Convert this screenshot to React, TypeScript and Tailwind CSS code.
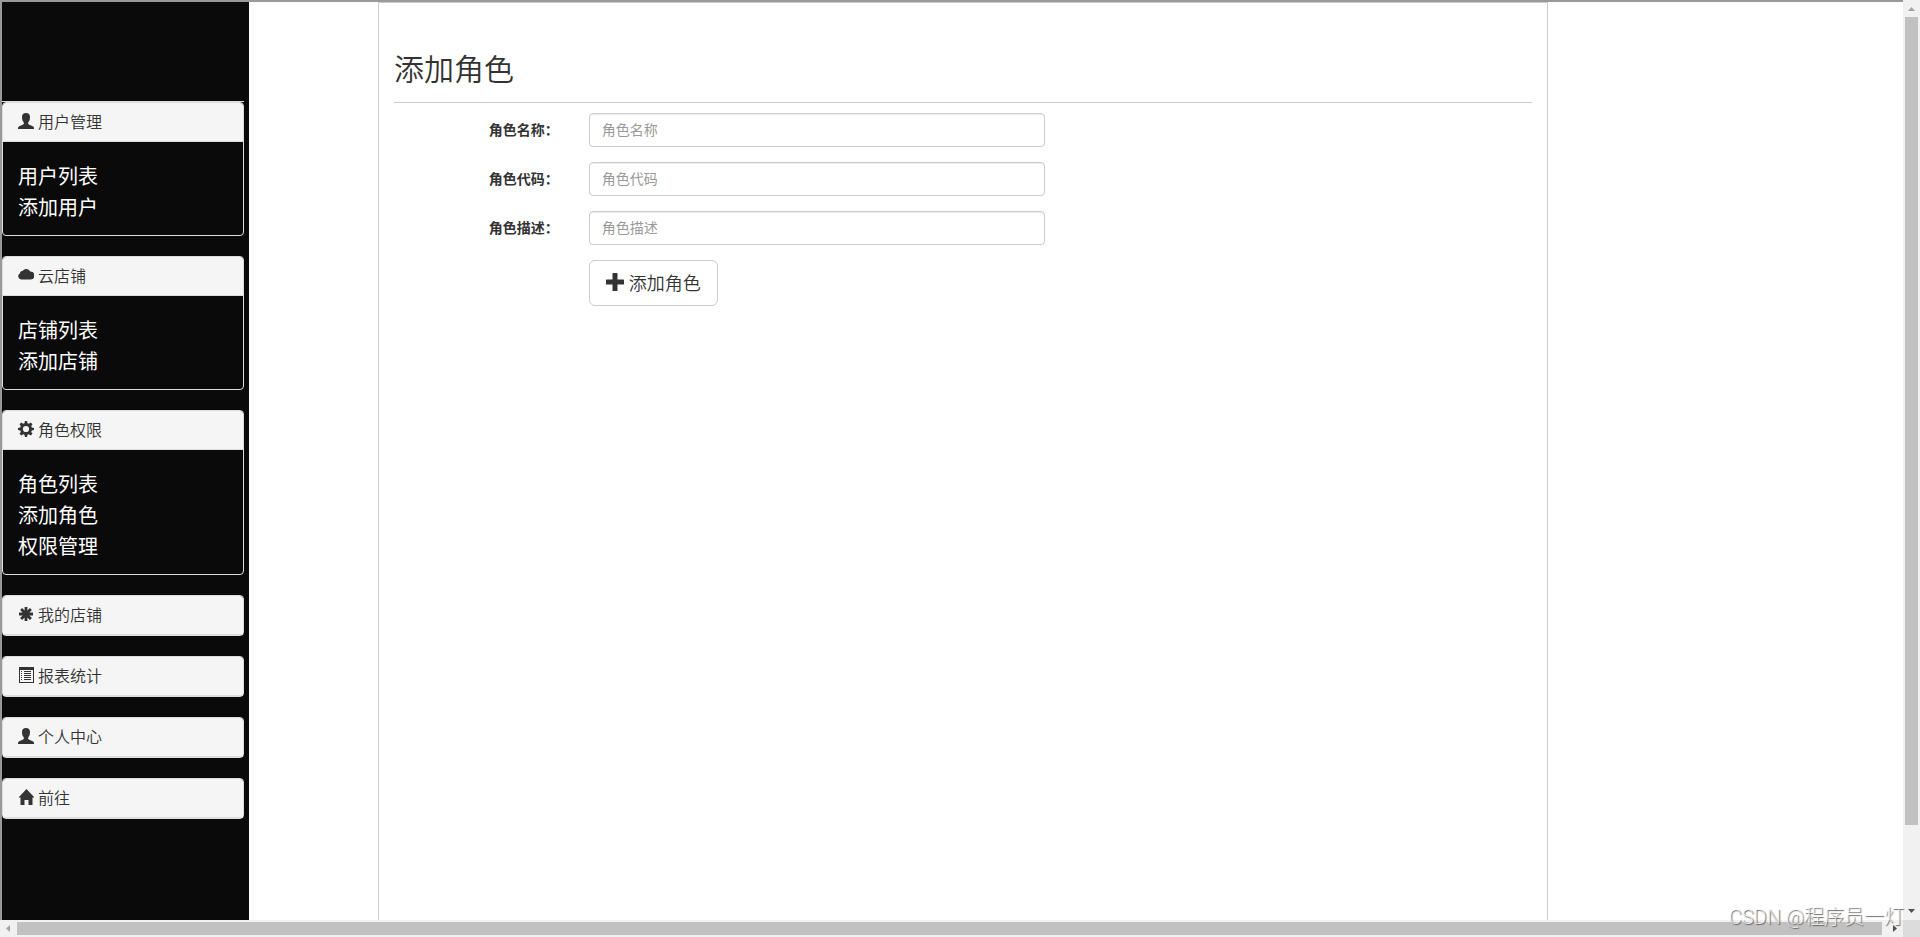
import { useState } from "react";
import type { ReactNode } from "react";

interface MenuGroup {
  title: string;
  icon: ReactNode;
  items?: string[];
}

/* =========================
   ICONS
========================= */
function Icon({ children, className = "size-4" }: { children: ReactNode; className?: string }) {
  return (
    <svg viewBox="0 0 16 16" fill="currentColor" aria-hidden="true" className={`shrink-0 ${className}`}>
      {children}
    </svg>
  );
}

const userIcon = (
  <Icon>
    <path d="M8 0C5.400 0 4 1.600 4 4c0 1.900.3 3.300 1 4.300.5.700.9 1.200.9 1.900 0 .7-.4 1.100-1.300 1.500L1.200 13.300C.4 13.700 0 14.200 0 15v1h16v-1c0-.8-.4-1.300-1.200-1.700l-3.400-1.600c-.9-.4-1.300-.8-1.300-1.500 0-.7.4-1.200.9-1.900.7-1 1-2.400 1-4.300C12 1.600 10.600 0 8 0z" />
  </Icon>
);

const cloudIcon = (
  <Icon>
    <path d="M3.300 12.500A3.200 3.200 0 0 1 1.900 6.500C2 4.800 3 3.700 4.500 4A4.400 4.400 0 0 1 12.200 4.600 3.950 3.950 0 1 1 12.700 12.500z" />
  </Icon>
);

const cogIcon = (
  <Icon>
    <path
      fillRule="evenodd"
      d="M6.900 0h2.200l.4 2.200 1.400.6L12.700 1.500l1.800 1.800-1.300 1.800.6 1.400L16 6.900v2.200l-2.200.4-.6 1.400 1.300 1.800-1.800 1.800-1.800-1.300-1.400.6L9.100 16H6.900l-.4-2.200-1.400-.6-1.800 1.300-1.800-1.800 1.300-1.800-.6-1.400L0 9.100V6.900l2.200-.4.6-1.400L1.500 3.300l1.800-1.800 1.800 1.300 1.400-.6zM8 4.900a3.100 3.100 0 1 0 0 6.200 3.100 3.100 0 0 0 0-6.200z"
    />
  </Icon>
);

const asteriskIcon = (
  <Icon>
    <path d="M6.600 1h2.800v3.600l2.500-2.500 2 2-2.500 2.500H15v2.800h-3.600l2.500 2.500-2 2-2.500-2.500V15H6.600v-3.600l-2.500 2.500-2-2 2.500-2.500H1V6.600h3.600L2.100 4.100l2-2 2.500 2.500z" />
  </Icon>
);

const listIcon = (
  <Icon>
    <path
      fillRule="evenodd"
      d="M1 0h15v16H1zM2 3v12h13V3zM3 4h1v1H3zM6 4h7v1H6zM3 6h1v1H3zM6 6h7v1H6zM3 8h1v1H3zM6 8h7v1H6zM3 10h1v1H3zM6 10h7v1H6zM3 12h1v1H3zM6 12h7v1H6z"
    />
  </Icon>
);

const homeIcon = (
  <Icon>
    <path d="M8.500 0 16.500 8.500H14.500V16H10.500V11H6.500V16H2.500V8.500H.5z" />
  </Icon>
);

const groups: MenuGroup[] = [
  { title: "用户管理", icon: userIcon, items: ["用户列表", "添加用户"] },
  { title: "云店铺", icon: cloudIcon, items: ["店铺列表", "添加店铺"] },
  { title: "角色权限", icon: cogIcon, items: ["角色列表", "添加角色", "权限管理"] },
  { title: "我的店铺", icon: asteriskIcon },
  { title: "报表统计", icon: listIcon },
  { title: "个人中心", icon: userIcon },
  { title: "前往", icon: homeIcon },
];

const fields = [
  { id: "roleName", label: "角色名称" },
  { id: "roleCode", label: "角色代码" },
  { id: "roleDesc", label: "角色描述" },
];

/* =========================
   SIDEBAR
========================= */
function MenuPanel({ group }: { group: MenuGroup }) {
  return (
    <section className="rounded border border-[#ddd]">
      <h3 className="h-[39px] rounded-t-[3px] border-b border-[#ddd] bg-[#f5f5f5] px-[15px] text-base font-[350] text-[#333]">
        <a href="#" className="flex h-full items-center gap-1 pb-0.5 leading-5">
          {group.icon}
          {group.title}
        </a>
      </h3>
      {group.items && (
        <ul className="px-[15px] pt-[18px] pb-[13px] text-xl leading-[31px] text-white">
          {group.items.map((item) => (
            <li key={item}>
              <a href="#">{item}</a>
            </li>
          ))}
        </ul>
      )}
    </section>
  );
}

function Sidebar() {
  return (
    <nav className="w-[247px] shrink-0 bg-[#0a0a0a] pt-[99px] pr-[5px]">
      <div className="flex flex-col gap-5 border-t border-[#ddd]">
        {groups.map((group) => (
          <MenuPanel key={group.title} group={group} />
        ))}
      </div>
    </nav>
  );
}

/* =========================
   ROLE FORM
========================= */
function RoleForm() {
  const [values, setValues] = useState<Record<string, string>>({});

  return (
    <form className="-mx-[15px] mt-2.5 flex flex-col gap-[15px]" onSubmit={(e) => e.preventDefault()}>
      {fields.map(({ id, label }) => (
        <div key={id} className="grid grid-cols-12">
          <label htmlFor={id} className="col-span-2 px-[15px] pt-1.5 text-right text-sm font-bold text-[#333]">
            {label}：
          </label>
          <div className="col-span-5 px-[15px]">
            <input
              id={id}
              type="text"
              placeholder={label}
              value={values[id] ?? ""}
              onChange={(e) => setValues({ ...values, [id]: e.target.value })}
              className="block h-[34px] w-full rounded border border-[#ccc] bg-white px-3 pb-0.5 text-sm text-[#555] shadow-[inset_0_1px_1px_rgba(0,0,0,0.075)] placeholder:text-[#999]"
            />
          </div>
        </div>
      ))}
      <div className="grid grid-cols-12">
        <div className="col-span-5 col-start-3 px-[15px]">
          <button
            type="submit"
            className="flex h-[46px] items-center gap-[5px] rounded-md border border-[#ccc] bg-white px-4 pb-0.5 text-lg font-[350] text-[#333]"
          >
            <Icon className="size-[18px]">
              <path d="M6.300 0h3.400q.5 0 .5.500v5.300h5.300q.5 0 .5.500v3.400q0 .5-.5.500h-5.300v5.300q0 .5-.5.500H6.300q-.5 0-.5-.5v-5.300H.5q-.5 0-.5-.5V6.300q0-.5.5-.5h5.300V.5q0-.5.5-.5z" />
            </Icon>
            添加角色
          </button>
        </div>
      </div>
    </form>
  );
}

/* =========================
   SCROLLBARS
========================= */
function Arrow({ points, className }: { points: string; className: string }) {
  return (
    <svg viewBox="0 0 17 17" aria-hidden="true" className={`size-[17px] shrink-0 ${className}`}>
      <polygon points={points} fill="currentColor" />
    </svg>
  );
}

export default function App() {
  return (
    <div className="relative grid h-screen grid-cols-[1fr_17px] grid-rows-[1fr_17px] overflow-hidden bg-white font-['Noto_Sans_CJK_SC',sans-serif]">
      <div className="flex min-h-0 overflow-hidden border-t-2 border-l-2 border-[#999]">
        <Sidebar />
        <main className="ml-[129px] w-full max-w-[1170px] border border-b-0 border-[#ccc] px-[15px]">
          <h2 className="border-b border-[#ccc] pt-[42px] pb-[13px] text-3xl leading-[44px] font-[350] text-[#333]">
            添加角色
          </h2>
          <RoleForm />
        </main>
      </div>

      <div className="flex flex-col items-center bg-[#f1f1f1]">
        <Arrow points="5,11 12,11 8.500,7" className="text-[#a3a3a3]" />
        <div className="w-[13px] grow-[808] bg-[#c1c1c1]" />
        <div className="grow-[78]" />
        <Arrow points="5,6 12,6 8.500,10" className="text-[#505050]" />
      </div>
      <div className="flex items-center bg-[#f1f1f1]">
        <Arrow points="10,5 10,12 6,8.500" className="text-[#a3a3a3]" />
        <div className="h-[13px] grow bg-[#c1c1c1]" />
        <div className="w-1" />
        <Arrow points="7,5 7,12 11,8.500" className="text-[#505050]" />
      </div>
      <div className="bg-[#dcdcdc]" />

      <p className="absolute right-4 bottom-1.5 font-[Roboto,'Noto_Sans_CJK_SC',sans-serif] text-xl leading-7 font-light text-white/70 [text-shadow:1px_1px_1px_#666]">
        CSDN @程序员一灯
      </p>
    </div>
  );
}
